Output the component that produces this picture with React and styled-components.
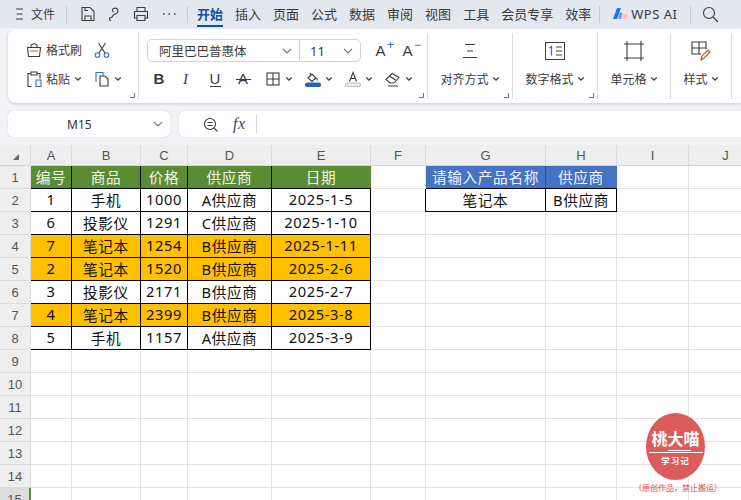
import React from 'react';
import styled, { createGlobalStyle } from 'styled-components';

const Global = createGlobalStyle`
  html, body { margin: 0; padding: 0; }
  body { background: #f1f2f5; }
`;
const FONT = `"Noto Sans", "Noto Sans CJK SC", sans-serif`;

const Page = styled.div`
  position: relative; width: 741px; height: 500px; overflow: hidden;
  background: #f1f2f5; color: #333; font-family: ${FONT};
`;
const TopBar = styled.div`
  height: 28px; display: flex; align-items: center; background: #e3e7ee; font-size: 13px; color: #3a3a3a;
  padding-left: 15px; box-sizing: border-box; white-space: nowrap;
`;
const Sep = styled.span`
  width: 1px; height: 17px; background: #c5c9d0; flex: none;
  margin: 0 ${p => p.$r}px 0 ${p => p.$l}px;
`;
const IconBtn = styled.span`
  display: inline-flex; align-items: center; justify-content: center; height: 16px; flex: none;
  margin: 0 ${p => p.$r || 0}px 0 ${p => p.$l || 0}px;
`;
const Plain = styled.span`
  margin-left: ${p => p.$l || 0}px; letter-spacing: ${p => p.$ls || 0}px; font-size: ${p => p.$size || 13}px;
`;
const Tab = styled.span`
  position: relative; margin-right: ${p => p.$r ?? 12}px; line-height: 20px; color: ${p => p.$on ? '#0f4fa8' : '#3a3a3a'};
  font-weight: ${p => p.$on ? 700 : 400};
  ${p => p.$on && `&::after { content: ''; position: absolute; left: 0; right: 0; bottom: -3px; height: 2px; background: #0f4fa8; }`}
`;
const Ribbon = styled.div`
  margin: 1px 0 0 8px; height: 74px; background: #fff; border-radius: 8px 0 0 8px;
  box-shadow: 0 1px 3px rgba(0,0,0,.16); display: flex; font-size: 12px; color: #3a3a3a;
`;
const Group = styled.div`
  position: relative; width: ${p => p.$w}px; flex: none; box-sizing: border-box; margin-top: 4px; height: 66px;
  border-right: 1px solid #dcdcdc;
  ${p => p.$dialog && `&::after { content: ''; position: absolute; right: 3px; bottom: 1px; width: 4px; height: 4px;
    border-right: 1px solid #777; border-bottom: 1px solid #777; }`}
`;
const ClipGroup = styled.div`
  display: grid; grid-template-columns: 68px 32px; grid-template-rows: 16px 16px; row-gap: 13px; padding: 9px 0 0 18px;
`;
const Tool = styled.span`
  display: inline-flex; align-items: center; gap: ${p => p.$gap ?? 4}px; white-space: nowrap;
  margin-left: ${p => p.$l || 0}px;
`;
const FontGroup = styled.div`
  padding: 6px 0 0 8px; display: flex; flex-direction: column; gap: 9px;
`;
const FontRow = styled.div`
  display: flex; align-items: center; height: ${p => p.$h}px; padding-left: ${p => p.$pl || 0}px;
`;
const Combo = styled.div`
  height: 23px; width: 214px; display: flex; box-sizing: border-box; border: 1px solid #d2d4d8; border-radius: 5px;
`;
const ComboPart = styled.span`
  width: ${p => p.$w}px; box-sizing: border-box; height: 100%; display: flex; align-items: center; justify-content: space-between;
  padding: 0 7px 0 ${p => p.$pl}px; border-right: ${p => p.$div ? '1px solid #d2d4d8' : 'none'}; font-size: ${p => p.$size}px;
`;
const Letter = styled.span`
  position: relative; display: inline-flex; justify-content: center; width: 15px; font-size: 15px; line-height: 16px; color: #3a3a3a;
  margin-left: ${p => p.$l || 0}px;
  font-family: ${p => p.$italic ? '"Liberation Serif", serif' : '"Liberation Sans", sans-serif'};
  font-weight: ${p => p.$bold ? 700 : 400}; font-style: ${p => p.$italic ? 'italic' : 'normal'};
  ${p => p.$under && `&::after { content: ''; position: absolute; left: 2px; right: 2px; top: 15px; height: 1px; background: #3a3a3a; }`}
  ${p => p.$strike && `&::after { content: ''; position: absolute; left: 0; right: 0; top: 8px; height: 1px; background: #3a3a3a; }`}
`;
const Super = styled.span`
  position: absolute; right: -6px; top: -4px; font-size: 12px; line-height: 12px; color: #2f6fd0;
`;
const Stack = styled.div`
  display: flex; flex-direction: column; align-items: center; padding-top: ${p => p.$top || 10}px; gap: ${p => p.$gap || 11}px;
`;
const StackLabel = styled.span`
  display: inline-flex; align-items: center; gap: 3px; white-space: nowrap;
`;
const FormulaRow = styled.div`
  margin: 8px 0 0 8px; display: flex; gap: 9px; height: 26px;
`;
const NameBox = styled.div`
  width: 162px; background: #fff; border-radius: 5px; box-shadow: 0 0 1px rgba(0,0,0,.3); display: flex; align-items: center; justify-content: space-between;
  box-sizing: border-box; padding: 0 7px 0 59px; font-size: 12px; color: #333;
`;
const FormulaBox = styled.div`
  flex: 1; background: #fff; border-radius: 5px 0 0 5px; box-shadow: 0 0 1px rgba(0,0,0,.3); display: flex; align-items: center; padding-left: 24px; gap: 15px;
`;
const Fx = styled.i`
  font-family: "Liberation Serif", serif; font-size: 16px; color: #444; padding-right: 10px; border-right: 1px solid #d5d5d5; line-height: 18px; letter-spacing: 0.5px;
`;
const Grid = styled.div`
  margin-top: 8px; display: grid; grid-template-columns: 31px 41px 69px 47px 84px 99px 55px 120px 71px 72px 74px;
  grid-template-rows: 21px repeat(15, 23px); background: #fff;
`;
const ColHead = styled.div`
  background: #eeeeee; border-right: 1px solid #dcdcdc; border-bottom: 1px solid #d4d4d4; box-sizing: border-box;
  display: flex; align-items: center; justify-content: center; font-size: 13px; color: #555;
  font-family: "Liberation Sans", sans-serif;
`;
const RowHead = styled.div`
  background: ${p => p.$active ? '#dcdcdc' : '#eeeeee'}; border-right: ${p => p.$active ? '2px solid #5b8c33' : '1px solid #dcdcdc'}; border-bottom: 1px solid #dcdcdc; box-sizing: border-box;
  display: flex; align-items: center; justify-content: center; font-size: 13px; color: #555;
  font-family: "Liberation Sans", sans-serif;
`;
const Cell = styled.div`
  box-sizing: border-box; display: flex; align-items: center; justify-content: center; overflow: hidden; white-space: nowrap;
  padding-bottom: 2px;
  font-size: 14.67px; letter-spacing: 0.6px; background: ${p => p.$bg || '#fff'}; color: ${p => p.$fg || '#111'};
  border-right: 1px solid ${p => p.$rc || '#e3e3e3'}; border-bottom: 1px solid ${p => p.$bc || '#e3e3e3'};
  ${p => p.$left && 'box-shadow: -1px 0 0 #000;'}
`;
const Corner = styled(ColHead)`
  position: relative;
  &::after { content: ''; position: absolute; right: 11px; bottom: 5px; border-left: 6px solid transparent; border-bottom: 6px solid #666; }
`;
const Stamp = styled.div`
  position: absolute; left: 646px; top: 413px; width: 59px; height: 67px; background: #dc5b5b; border-radius: 50%; color: #fff;
  display: flex; flex-direction: column; align-items: center; padding-top: 16px; box-sizing: border-box; font-weight: 700;
`;
const StampTitle = styled.span`
  position: relative; font-size: 16px; line-height: 20px; white-space: nowrap; padding-bottom: 3px; border-bottom: 1px solid #fff; width: 54px; text-align: center;
  &::after { content: ''; position: absolute; left: 19px; bottom: 1px; width: 23px; height: 1px; background: #fff; }
`;
const StampSub = styled.span`
  font-size: 8.5px; line-height: 14px; margin-top: 1px; letter-spacing: 1px;
`;
const StampNote = styled.div`
  position: absolute; left: 634px; top: 482px; width: 84px; text-align: center; font-size: 8px; line-height: 12px; color: #d24c4c; white-space: nowrap;
`;

const S = ({ children, w = 16, h = 16, vb, ...r }) => (
  <svg width={w} height={h} viewBox={vb || `0 0 ${w} ${h}`} fill="none" stroke="#3c3c3c" strokeWidth="1.1" {...r}>{children}</svg>
);
const Chev = () => (
  <S w={8} h={6} vb="0 0 8 6" strokeWidth="1.3"><path d="M1.3 1.5 4 4.2 6.7 1.5" /></S>
);
const Chevron = () => <S w={10} h={6} vb="0 0 10 6" stroke="#777"><path d="M1 1l4 4 4-4" /></S>;

const green = '#5b8c33', orange = '#ffc000', blue = '#4472c4';
const cols = ['A', 'B', 'C', 'D', 'E', 'F', 'G', 'H', 'I', 'J'];
const table = [
  ['编号', '商品', '价格', '供应商', '日期'],
  ['1', '手机', '1000', 'A供应商', '2025-1-5'],
  ['6', '投影仪', '1291', 'C供应商', '2025-1-10'],
  ['7', '笔记本', '1254', 'B供应商', '2025-1-11'],
  ['2', '笔记本', '1520', 'B供应商', '2025-2-6'],
  ['3', '投影仪', '2171', 'B供应商', '2025-2-7'],
  ['4', '笔记本', '2399', 'B供应商', '2025-3-8'],
  ['5', '手机', '1157', 'A供应商', '2025-3-9'],
];
const side = [['请输入产品名称', '供应商'], ['笔记本', 'B供应商']];

function renderRow(r) {
  const out = [<RowHead key={`h${r}`} $active={r === 14}>{r + 1}</RowHead>];
  cols.forEach((c, i) => {
    let text = '', props = {};
    if (r < 8 && i < 5) {
      text = table[r][i];
      const hi = table[r][1] === '笔记本';
      props = {
        $rc: r === 0 && i === 4 ? green : '#000', $bc: '#000',
        $bg: r === 0 ? green : hi ? orange : '#fff', $fg: r === 0 ? '#f3f6ef' : '#111',
      };
    } else if (r < 2 && (i === 6 || i === 7)) {
      text = side[r][i - 6];
      props = {
        $rc: r === 0 ? (i === 6 ? '#2f4f86' : blue) : '#000', $bc: '#000', $left: r === 1 && i === 6,
        $bg: r === 0 ? blue : '#fff', $fg: r === 0 ? '#f1f4fb' : '#111',
      };
    }
    out.push(<Cell key={`${c}${r}`} {...props}>{text}</Cell>);
  });
  return out;
}

export default function App() {
  return (
    <Page>
      <Global />
      <TopBar>
        <IconBtn><S w={10} h={16} vb="0 0 10 16"><path d="M1 3h7M1.600 8h6M1 13h7" /></S></IconBtn>
        <Plain $l={6} $size={12}>文件</Plain>
        <Sep $l={11} $r={13} />
        <IconBtn $r={12}><S><path d="M2 1.500h8l4 4v9H2z M5 14.500V10h6v4.500 M5 1.500v3h3" /></S></IconBtn>
        <IconBtn $r={12}><S w={13} vb="0 0 13 16"><path d="M3 14.500c-2 0-2.200-3 0-3 2 0 1-2 3-3 3-1 4-2 4-3.500C10 2.500 7.500 1.500 5.500 2.500 4 3.300 4 5.500 5.500 6" /></S></IconBtn>
        <IconBtn $r={12}><S><path d="M4 5V1.500h8V5 M4 12H1.500V5.500h13V12H12 M4 9.500h8v5H4z" /></S></IconBtn>
        <IconBtn><S><path d="M2 8h1.500M7.500 8H9M13 8h1.500" strokeWidth="1.500" /></S></IconBtn>
        <Sep $l={10} $r={9} />
        <Tab $on>开始</Tab><Tab>插入</Tab><Tab>页面</Tab><Tab>公式</Tab><Tab>数据</Tab><Tab>审阅</Tab><Tab>视图</Tab><Tab>工具</Tab><Tab>会员专享</Tab><Tab $r={8}>效率</Tab>
        <Sep $l={0} $r={12} />
        <IconBtn><svg width="17" height="14" viewBox="0 0 17 14"><path d="M5 1h4L5 12H1z" fill="#2f6fe0" /><path d="M8 5l3 2-2 5H6z" fill="#5aa0ef" /><circle cx="12.500" cy="9.500" r="3" fill="#f6c9b6" /></svg></IconBtn>
        <Plain $l={2} $ls={0.5}>WPS AI</Plain>
        <Sep $l={13} $r={11} />
        <IconBtn><S w={17} h={17}><circle cx="7" cy="7" r="5.500" /><path d="M11 11l5 5" /></S></IconBtn>
      </TopBar>
      <Ribbon>
        <Group $w={131} $dialog>
          <ClipGroup>
            <Tool><S><path d="M1.500 5.500h13l-1 9h-11z M5 5.500V3l3-1.500 3 1.500v2.500" /><path d="M4 9h8" stroke="#c86a1e" /></S>格式刷</Tool>
            <Tool><S><circle cx="3.500" cy="13" r="2.300" stroke="#2f6fd0" /><circle cx="12.500" cy="13" r="2.300" stroke="#2f6fd0" /><path d="M5 11 11.500 1M11 11 4.500 1" /></S></Tool>
            <Tool><S><path d="M5 2.500H2v13h3.500 M11 2.500h3v5 M5 1h6v3H5z" /><path d="M10 9h5v6.500h-5z" stroke="#2f6fd0" /></S>粘贴<Chev /></Tool>
            <Tool><S><path d="M2 11V1.500h7v3" stroke="#2f6fd0" /><path d="M6 5h5l3 3v7H6z" /></S><Chev /></Tool>
          </ClipGroup>
        </Group>
        <Group $w={289} $dialog>
          <FontGroup>
            <FontRow $h={23}>
              <Combo>
                <ComboPart $w={152} $pl={11} $size={12.5} $div>阿里巴巴普惠体<Chevron /></ComboPart>
                <ComboPart $w={60} $pl={10} $size={13}>11<Chevron /></ComboPart>
              </Combo>
              <Letter $l={12}>A<Super>+</Super></Letter>
              <Letter $l={12}>A<Super>−</Super></Letter>
            </FontRow>
            <FontRow $h={16} $pl={4.5}>
              <Letter $bold>B</Letter>
              <Letter $italic $l={11.5}>I</Letter>
              <Letter $under $l={14.5}>U</Letter>
              <Letter $strike $l={13}>A</Letter>
              <Tool $l={15.5} $gap={5}><S w={14} h={14}><rect x="1" y="1" width="12" height="12" /><path d="M7 1v12M1 7h12" /></S><Chev /></Tool>
              <Tool $l={12} $gap={4}><S><path d="M3 7l4-4 4 4-4 3.500z M5 2l1 2 M12 7v2.500" /><rect x="0.500" y="12" width="15" height="3.500" rx="1.700" fill="#2f5fc0" stroke="#2f5fc0" /></S><Chev /></Tool>
              <Tool $l={12} $gap={4}><S><path d="M4.500 10.500 8 1.500l3.500 9M5.800 7.500h4.400" /><rect x="0.500" y="12" width="15" height="3.500" rx="1.700" fill="#eeeeee" stroke="#bbb" /></S><Chev /></Tool>
              <Tool $l={12} $gap={4}><S><path d="M1 8.500l6-6 7 4-5 5.500H5z M4.500 5l6 4 M3 15h10" /></S><Chev /></Tool>
            </FontRow>
          </FontGroup>
        </Group>
        <Group $w={85} $dialog>
          <Stack>
            <S><path d="M3 1.500h10M5 8h6M1 14.500h14" /></S>
            <StackLabel>对齐方式<Chev /></StackLabel>
          </Stack>
        </Group>
        <Group $w={85} $dialog>
          <Stack $top={9} $gap={10}>
            <svg width="20" height="18" viewBox="0 0 20 18" fill="none" stroke="#3c3c3c"><rect x="0.500" y="0.500" width="19" height="17" /><path d="M11 5h6M11 9h6M11 13h6" /><path d="M4.500 6 6.500 4.500V13.500" stroke="#2f6fd0" strokeWidth="1.300" /></svg>
            <StackLabel>数字格式<Chev /></StackLabel>
          </Stack>
        </Group>
        <Group $w={73}>
          <Stack $top={8} $gap={9}>
            <S w={20} h={20}><path d="M3 0v20M17 0v20M0 3h20M0 17h20" /></S>
            <StackLabel>单元格<Chev /></StackLabel>
          </Stack>
        </Group>
        <Group $w={61}>
          <Stack $top={8} $gap={9}>
            <S w={20} h={20}><path d="M10 13H1V1h14v7 M8 1v12 M1 7h14" /><path d="M10 19l1-4 6-6 2 2-6 6z" stroke="#c8502a" /></S>
            <StackLabel>样式<Chev /></StackLabel>
          </Stack>
        </Group>
      </Ribbon>
      <FormulaRow>
        <NameBox>M15<Chevron /></NameBox>
        <FormulaBox>
          <S w={15} h={15}><circle cx="7" cy="7" r="5.500" /><path d="M4.500 5.500h5M4.500 8.500h5M11 11l3.500 3.500" /></S>
          <Fx>fx</Fx>
        </FormulaBox>
      </FormulaRow>
      <Grid>
        <Corner />
        {cols.map(c => <ColHead key={c}>{c}</ColHead>)}
        {Array.from({ length: 15 }, (_, r) => renderRow(r))}
      </Grid>
      <Stamp><StampTitle>桃大喵</StampTitle><StampSub>学习记</StampSub></Stamp>
      <StampNote>（原创作品，禁止搬运）</StampNote>
    </Page>
  );
}
